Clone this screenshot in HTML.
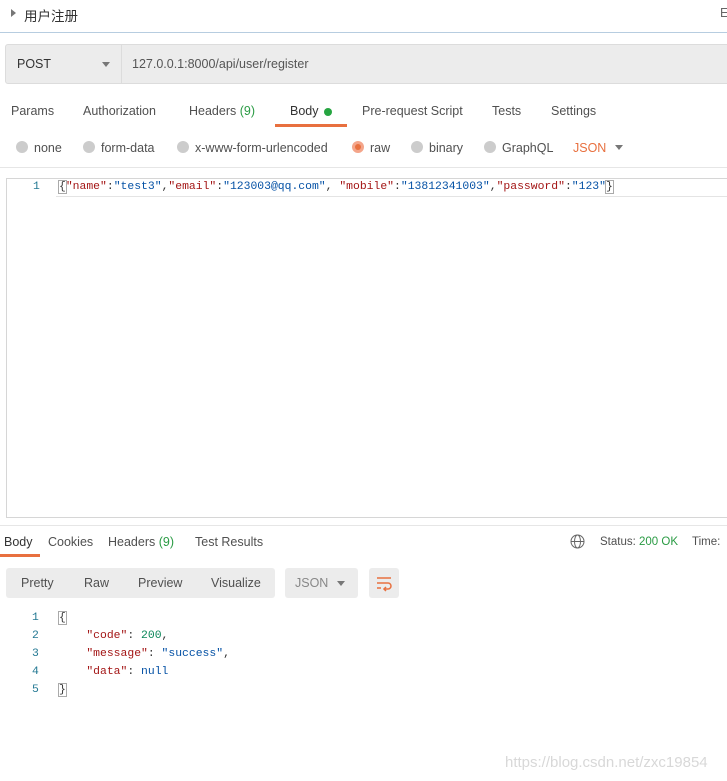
<!DOCTYPE html>
<html><head><meta charset="utf-8"><style>
*{margin:0;padding:0;box-sizing:border-box}
body{width:727px;height:781px;background:#fff;font-family:"Liberation Sans","Noto Sans CJK SC",sans-serif;font-size:12.5px;color:#505050;position:relative;overflow:hidden}
.a{position:absolute;white-space:nowrap}
.m{font-family:"Liberation Mono",monospace;font-size:11.4px}
.k{color:#a31515}.s{color:#0451a5}.n{color:#098658}
.r{position:absolute;width:12px;height:12px;border-radius:50%;background:#ccc}
</style></head><body>
<div class="a" style="left:11px;top:9px;width:0;height:0;border-top:4px solid transparent;border-bottom:4px solid transparent;border-left:5px solid #777"></div>
<div class="a" style="left:24px;top:5px;font-size:13.5px;color:#333">用户注册</div>
<div class="a" style="left:720px;top:6px;color:#666">E</div>
<div class="a" style="left:0;top:32px;width:727px;height:1px;background:#b7cde0"></div>
<div class="a" style="left:5px;top:44px;width:730px;height:40px;background:#ececec;border:1px solid #dcdcdc;border-radius:3px"></div>
<div class="a" style="left:121px;top:45px;width:1px;height:38px;background:#dcdcdc"></div>
<div class="a" style="left:17px;top:57px;color:#333">POST</div>
<div class="a" style="left:102px;top:62px;border-left:4px solid transparent;border-right:4px solid transparent;border-top:5px solid #777"></div>
<div class="a" style="left:132px;top:57px;color:#555">127.0.0.1:8000/api/user/register</div>
<div class="a" style="left:11px;top:104px">Params</div>
<div class="a" style="left:83px;top:104px">Authorization</div>
<div class="a" style="left:189px;top:104px">Headers <span style="color:#2a9b44">(9)</span></div>
<div class="a" style="left:290px;top:104px;color:#333">Body</div>
<div class="a" style="left:324px;top:108px;width:8px;height:8px;border-radius:50%;background:#26a541"></div>
<div class="a" style="left:275px;top:124px;width:72px;height:3px;background:#e8703f"></div>
<div class="a" style="left:362px;top:104px">Pre-request Script</div>
<div class="a" style="left:492px;top:104px">Tests</div>
<div class="a" style="left:551px;top:104px">Settings</div>
<div class="r" style="left:16px;top:141px"></div><div class="a" style="left:34px;top:141px">none</div>
<div class="r" style="left:83px;top:141px"></div><div class="a" style="left:101px;top:141px">form-data</div>
<div class="r" style="left:177px;top:141px"></div><div class="a" style="left:195px;top:141px">x-www-form-urlencoded</div>
<div class="r" style="left:352px;top:141px;background:#f4a58a"></div><div class="a" style="left:355px;top:144px;width:6px;height:6px;border-radius:50%;background:#e8703f"></div><div class="a" style="left:370px;top:141px">raw</div>
<div class="r" style="left:411px;top:141px"></div><div class="a" style="left:429px;top:141px">binary</div>
<div class="r" style="left:484px;top:141px"></div><div class="a" style="left:502px;top:141px">GraphQL</div>
<div class="a" style="left:573px;top:141px;color:#e8703f">JSON</div>
<div class="a" style="left:615px;top:145px;border-left:4px solid transparent;border-right:4px solid transparent;border-top:5px solid #777"></div>
<div class="a" style="left:0;top:167px;width:727px;height:1px;background:#e6e6e6"></div>
<div class="a" style="left:6px;top:178px;width:730px;height:340px;border:1px solid #d6d6d6"></div>
<div class="a" style="left:56px;top:179px;width:680px;height:18px;border-bottom:1px solid #e4e4e4"></div>
<div class="a m" style="left:33px;top:181px;color:#237893">1</div>
<div class="a m" style="left:59px;top:181px;color:#333"><span style="outline:1px solid #aaa">{</span><span class="k">"name"</span>:<span class="s">"test3"</span>,<span class="k">"email"</span>:<span class="s">"123003@qq.com"</span>, <span class="k">"mobile"</span>:<span class="s">"13812341003"</span>,<span class="k">"password"</span>:<span class="s">"123"</span><span style="outline:1px solid #aaa">}</span></div>
<div class="a" style="left:0;top:525px;width:727px;height:1px;background:#e6e6e6"></div>
<div class="a" style="left:4px;top:535px;color:#333">Body</div>
<div class="a" style="left:0;top:554px;width:40px;height:3px;background:#e8703f"></div>
<div class="a" style="left:48px;top:535px">Cookies</div>
<div class="a" style="left:108px;top:535px">Headers <span style="color:#2a9b44">(9)</span></div>
<div class="a" style="left:195px;top:535px">Test Results</div>
<svg class="a" style="left:570px;top:534px" width="15" height="15" viewBox="0 0 15 15" fill="none" stroke="#666" stroke-width="1"><circle cx="7.5" cy="7.5" r="6.5"/><ellipse cx="7.5" cy="7.5" rx="3" ry="6.5"/><line x1="1" y1="7.5" x2="14" y2="7.5"/></svg>
<div class="a" style="left:600px;top:536px;font-size:11.5px">Status: <span style="color:#2a9b44">200 OK</span></div>
<div class="a" style="left:692px;top:536px;font-size:11.5px">Time:</div>
<div class="a" style="left:6px;top:568px;width:269px;height:30px;background:#ececec;border-radius:3px"></div>
<div class="a" style="left:21px;top:576px">Pretty</div>
<div class="a" style="left:84px;top:576px">Raw</div>
<div class="a" style="left:138px;top:576px">Preview</div>
<div class="a" style="left:211px;top:576px">Visualize</div>
<div class="a" style="left:285px;top:568px;width:73px;height:30px;background:#ececec;border-radius:3px"></div>
<div class="a" style="left:295px;top:576px;color:#888">JSON</div>
<div class="a" style="left:337px;top:581px;border-left:4px solid transparent;border-right:4px solid transparent;border-top:5px solid #777"></div>
<div class="a" style="left:369px;top:568px;width:30px;height:30px;background:#ececec;border-radius:3px"></div>
<svg class="a" style="left:375px;top:574px" width="18" height="18" viewBox="0 0 18 18" fill="none" stroke="#e8703f" stroke-width="1.5"><line x1="2" y1="4" x2="16" y2="4"/><path d="M2 9h11a3 3 0 0 1 0 6h-4"/><path d="M11 13l-2 2 2 2"/><line x1="2" y1="14" x2="6" y2="14"/></svg>
<div class="a m" style="left:32px;top:609px;color:#237893;line-height:18px">1<br>2<br>3<br>4<br>5</div>
<div class="a m" style="left:59px;top:609px;color:#333;line-height:18px"><span style="outline:1px solid #aaa">{</span><br>&nbsp;&nbsp;&nbsp;&nbsp;<span class="k">"code"</span>: <span class="n">200</span>,<br>&nbsp;&nbsp;&nbsp;&nbsp;<span class="k">"message"</span>: <span class="s">"success"</span>,<br>&nbsp;&nbsp;&nbsp;&nbsp;<span class="k">"data"</span>: <span class="s">null</span><br><span style="outline:1px solid #aaa">}</span></div>
<div class="a" style="left:505px;top:754px;font-size:15px;color:#d8d8d8">https://blog.csdn.net/zxc19854</div>
</body></html>
